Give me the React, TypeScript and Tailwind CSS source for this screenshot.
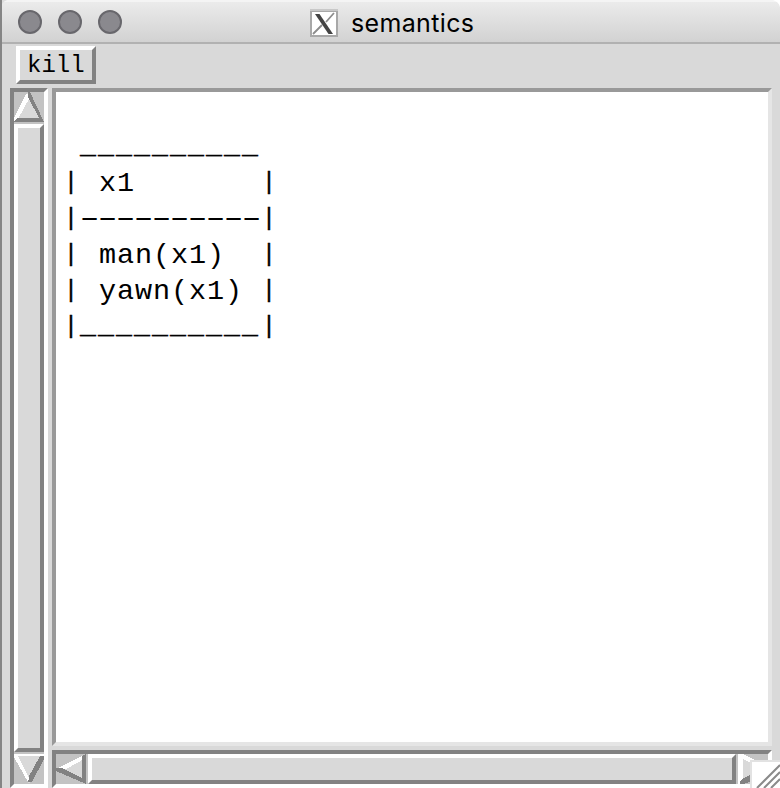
import React from "react";

const mono = "font-['Liberation_Mono',monospace]";

function Light() {
  return <span className="size-6 rounded-full border-2 border-[#68676c] bg-[#8a898e]" />;
}

function Bar() {
  return (
    <span className="w-[18px] shrink-0 pt-px text-center text-[24px] leading-[36px] [-webkit-text-stroke:0.4px_black]">|</span>
  );
}

function Row({ text }: { text: string }) {
  return (
    <div className="flex h-9 w-[216px]">
      <Bar />
      <span className="w-[180px] whitespace-pre pt-0.5 pl-px text-[28.5px] leading-[36px] tracking-[0.9px]">{text}</span>
      <Bar />
    </div>
  );
}

function Underscores() {
  return (
    <span className="w-[180px] whitespace-pre text-[26.66px] leading-[36px] tracking-[2px] [-webkit-text-stroke:0.3px_black]">
      {"__________"}
    </span>
  );
}

function Dashes() {
  return (
    <span className="flex w-[180px]">
      <span className="-ml-[6px] w-[90px] shrink-0 origin-left scale-x-[2] whitespace-pre pt-px text-[26px] leading-[36px] tracking-[-6.6px]">
        {"----------"}
      </span>
    </span>
  );
}

export default function App() {
  return (
    <div className="flex h-[788px] w-[780px] flex-col overflow-hidden border-l-2 border-[#858585] bg-[#d9d9d9] text-black">
      <header className="relative flex h-11 shrink-0 items-center border-t-2 border-b-2 border-t-[#f4f4f4] border-b-[#b1b1b1] bg-linear-to-b from-[#ebebeb] to-[#d2d2d2]">
        <div className="flex gap-4 pl-4">
          <Light />
          <Light />
          <Light />
        </div>
        <svg className="mt-1 ml-[187px] h-[30px] w-[30px]" viewBox="0 0 30 30">
          <rect x="1" y="0" width="28" height="28" fill="#c8c8c8" />
          <rect x="1" y="2" width="28" height="26" fill="#a8a8a8" />
          <rect x="3" y="3" width="24" height="23" fill="#fff" />
          <path d="M25 4L17 13M13 16L4 25" stroke="#8c8c8c" strokeWidth="1.8" />
          <path d="M6 5h4.500L24 25h-4.500z" fill="#444" />
        </svg>
        <h1 className="mt-0.5 ml-[12px] font-['Inter',sans-serif] text-[25px] leading-[30px] tracking-[0.35px]">semantics</h1>
        <svg className="absolute -top-0.5 right-0 size-2" viewBox="0 0 8 8">
          <path d="M1 0h7v7Q7 2 1 0" fill="#fff" />
        </svg>
        <svg className="absolute -top-0.5 -left-0.5 size-2" viewBox="0 0 8 8">
          <path d="M0 0h7Q2 2 0 8" fill="#dedede" />
        </svg>
      </header>
      <div className="flex h-11 shrink-0 pt-0.5 pl-[14px]">
        <button className={`h-[38px] w-20 border-4 border-t-white border-r-[#828282] border-b-[#828282] border-l-white ${mono} pt-px pl-px text-left text-[24px] leading-[30px]`}>
          <span className="pl-1.5">kill</span>
        </button>
      </div>
      <div className="flex h-[700px] shrink-0 pl-2">
        <div className="flex h-[700px] w-[38px] flex-col border-4 border-t-[#828282] border-r-white border-b-white border-l-[#828282] bg-[#c3c3c3]">
          <svg className="h-8 w-[30px] shrink-0" viewBox="0 0 30 32" shapeRendering="crispEdges">
            <path d="M14 0L0 30H30L16 0z" fill="#d9d9d9" />
            <path d="M12 2L0 26V30L4 27L16 5V2z" fill="#fff" />
            <path d="M14 0H16L30 30H0L3 26H25L14 5z" fill="#828282" />
          </svg>
          <div className="h-[628px] shrink-0 border-4 border-t-white border-r-[#828282] border-b-[#828282] border-l-white bg-[#d9d9d9]" />
          <svg className="mt-0.5 h-[30px] w-[30px] shrink-0" viewBox="0 0 30 30" shapeRendering="crispEdges">
            <path d="M0 0H30L15 30z" fill="#d9d9d9" />
            <path d="M30 1V5L18 28H14V24L26 2z" fill="#828282" />
            <path d="M0 0H30V2H4L15 24L14 28L0 3z" fill="#fff" />
          </svg>
        </div>
        <div className="ml-1 flex w-[720px] flex-col">
          <main className={`h-[658px] border-4 border-t-[#999] border-r-[#e5e5e5] border-b-[#e5e5e5] border-l-[#999] bg-white pt-9 pl-[6px] ${mono}`}>
            <div className="flex h-9 pl-[18px]"><Underscores /></div>
            <Row text=" x1" />
            <div className="flex h-9"><Bar /><Dashes /><Bar /></div>
            <Row text=" man(x1)" />
            <Row text=" yawn(x1)" />
            <div className="flex h-9"><Bar /><Underscores /><Bar /></div>
          </main>
          <div className="relative mt-1 flex h-[38px] border-4 border-t-[#828282] border-r-white border-b-white border-l-[#828282] bg-[#c3c3c3]">
            <svg className="h-[30px] w-8 shrink-0" viewBox="0 0 32 30" shapeRendering="crispEdges">
              <path d="M0 15L30 0V30z" fill="#d9d9d9" />
              <path d="M2 14L30 0V4L10 15z" fill="#fff" />
              <path d="M0 14H6L26 24V2L30 0V30L0 17z" fill="#828282" />
            </svg>
            <div className="h-[30px] w-[648px] shrink-0 border-4 border-t-white border-r-[#828282] border-b-[#828282] border-l-white bg-[#d9d9d9]" />
            <svg className="ml-0.5 h-[30px] w-[30px] shrink-0" viewBox="0 0 30 30" shapeRendering="crispEdges">
              <path d="M4 0L30 15L4 30z" fill="#d9d9d9" />
              <path d="M2 30V26L30 12V15V20L6 30z" fill="#828282" />
              <path d="M0 0H5L30 13V15H24L5 5V24L2 27V30H0z" fill="#fff" />
            </svg>
            <svg className="absolute -right-3 -bottom-1 h-7 w-[30px]" viewBox="0 0 30 28">
              <path d="M0 0H30V28H0z" fill="#e2e2e2" />
              <path d="M2 2H30V28H2z" fill="#fff" />
              <path d="M7 28L30 5M14 28L30 12M21 28L30 19" stroke="#8a8a8a" strokeWidth="2" />
            </svg>
          </div>
        </div>
      </div>
    </div>
  );
}
